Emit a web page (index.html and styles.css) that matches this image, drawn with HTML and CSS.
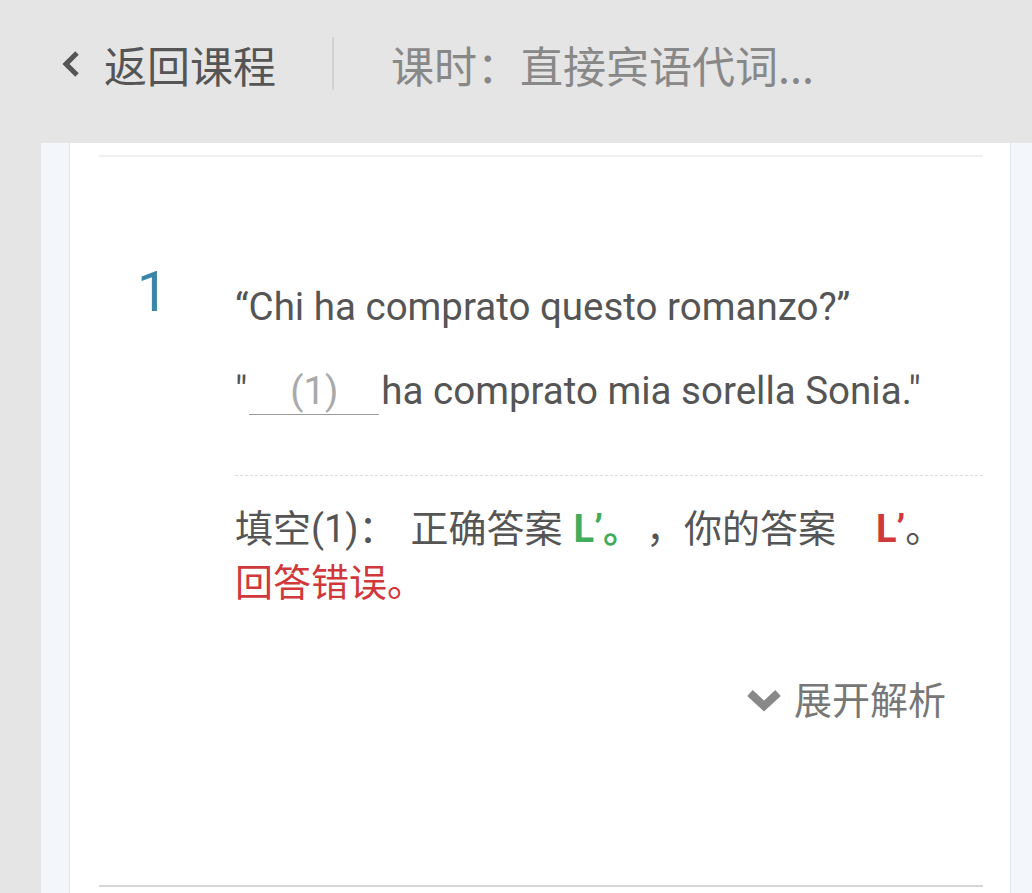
FILE: index.html
```html
<!DOCTYPE html>
<html>
<head>
    <title>课时：直接宾语代词</title>
    <link rel="stylesheet" href="styles.css">
</head>
<body>
    <div class="topbar">
        <a class="back" href="#">
            <svg class="back-icon" width="18" height="28" viewBox="0 0 18 28">
                <polyline points="15,3 4,14 15,25" fill="none" stroke="#555" stroke-width="5"/>
            </svg>
            <span>返回课程</span>
        </a>
        <span class="divider"></span>
        <span class="lesson-title">课时：直接宾语代词...</span>
    </div>

    <div class="page">
        <div class="frame">
            <div class="card">
                <div class="prev-end"></div>

                <div class="question">
                    <div class="q-num">1</div>
                    <div class="q-body">
                        <p class="q-line">“Chi ha comprato questo romanzo?”</p>
                        <p class="q-line q-line-blank">"<span class="blank">(1)</span>ha comprato mia sorella Sonia."</p>

                        <div class="answer">
                            <div><span class="label">填空(1)：</span>正确答案<b class="ok">L’。</b>，你的答案<b class="bad">L’</b>。</div>
                            <div class="wrong">回答错误。</div>
                        </div>

                        <div class="expand">
                            <svg class="expand-icon" width="36" height="24" viewBox="0 0 36 24">
                                <polyline points="4,4 18,17 32,4" fill="none" stroke="#888" stroke-width="8"/>
                            </svg>
                            <span>展开解析</span>
                        </div>
                    </div>
                </div>

                <div class="next-start"></div>
            </div>
        </div>
    </div>
</body>
</html>
```

FILE: styles.css
```css
body {
    margin: 0;
    background-color: #e5e5e5;
    font-family: Roboto, "Noto Sans CJK SC", sans-serif;
    color: #555;
}
.topbar {
    height: 143px;
    display: flex;
    align-items: center;
    padding: 0 0 16px 62px;
    box-sizing: border-box;
    font-family: "Noto Sans CJK SC", sans-serif;
    font-size: 43px;
}
.back {
    display: flex;
    align-items: center;
    color: #555;
    text-decoration: none;
}
.back-icon {
    margin-right: 24px;
}
.divider {
    width: 2px;
    height: 53px;
    background-color: #d2d2d2;
    margin: 0 57px 0 56px;
}
.lesson-title {
    color: #888;
}
.page {
    padding-left: 41px;
}
.frame {
    background-color: #f3f7fb;
    padding: 0 21px 0 28px;
}
.card {
    background-color: #fff;
    border-left: 1px solid #dde5ee;
    border-right: 1px solid #dde5ee;
    height: 750px;
    padding: 0 27px 0 29px;
    box-sizing: border-box;
    display: flex;
    flex-direction: column;
}
.prev-end {
    margin-top: 12px;
    height: 2px;
    background-color: #f0f0f0;
}
.question {
    display: flex;
    padding-top: 106px;
    flex: 1;
}
.q-num {
    width: 98px;
    padding-left: 38px;
    font-size: 56px;
    line-height: 56px;
    color: #3b86a8;
    margin-top: 1px;
}
.q-body {
    flex: 1;
    margin-top: 17px;
}
.q-line {
    margin: 0;
    font-size: 38.5px;
    line-height: 54px;
}
.q-line-blank {
    margin-top: 30px;
}
.blank {
    display: inline-block;
    width: 130px;
    margin: 0 2px 0 2px;
    text-align: center;
    color: #aaa;
    border-bottom: 1px solid #999;
    line-height: 1.2;
}
.answer {
    margin-top: 57px;
    border-top: 1px dashed #ddd;
    padding-top: 26px;
    font-size: 38px;
    line-height: 54px;
}
.label {
    margin-right: 14px;
}
.ok {
    color: #41ad5c;
    margin: 0 24px 0 11px;
}
.bad {
    color: #d0383b;
    margin-left: 40px;
}
.wrong {
    color: #d0383b;
}
.expand {
    display: flex;
    justify-content: flex-end;
    align-items: center;
    margin-top: 64px;
    padding-right: 37px;
    font-size: 38px;
    line-height: 54px;
    color: #777;
}
.expand-icon {
    margin-right: 12px;
}
.next-start {
    height: 2px;
    background-color: #d6d6d6;
    margin-bottom: 6px;
}
```
